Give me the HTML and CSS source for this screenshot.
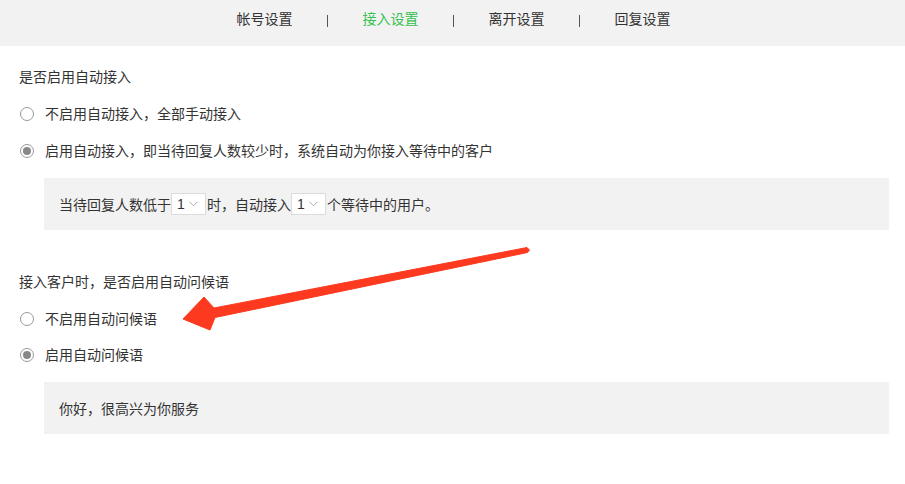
FILE: index.html
```html
<!DOCTYPE html>
<html lang="zh-CN">
<head>
<meta charset="utf-8">
<title>接入设置</title>
<link rel="stylesheet" href="styles.css">
</head>
<body>
<header class="nav">
  <span class="tab">帐号设置</span>
  <span class="sep"></span>
  <span class="tab active">接入设置</span>
  <span class="sep"></span>
  <span class="tab">离开设置</span>
  <span class="sep"></span>
  <span class="tab">回复设置</span>
</header>
<main class="main">
  <div class="title">是否启用自动接入</div>
  <div class="row"><span class="radio"></span><span>不启用自动接入，全部手动接入</span></div>
  <div class="row"><span class="radio checked"></span><span>启用自动接入，即当待回复人数较少时，系统自动为你接入等待中的客户</span></div>
  <div class="box">
    <span>当待回复人数低于</span><span class="select">1<svg class="chev" width="9" height="6" viewBox="0 0 9 6"><path d="M0.5 0.8 L4.5 4.8 L8.5 0.8" fill="none" stroke="#aaa" stroke-width="1"/></svg></span><span>时，自动接入</span><span class="select">1<svg class="chev" width="9" height="6" viewBox="0 0 9 6"><path d="M0.5 0.8 L4.5 4.8 L8.5 0.8" fill="none" stroke="#aaa" stroke-width="1"/></svg></span><span>个等待中的用户。</span>
  </div>
  <div class="title title2">接入客户时，是否启用自动问候语</div>
  <div class="row"><span class="radio"></span><span>不启用自动问候语</span></div>
  <div class="row row4"><span class="radio checked"></span><span>启用自动问候语</span></div>
  <div class="box">你好，很高兴为你服务</div>
</main>
<svg class="arrow" width="905" height="484" viewBox="0 0 905 484">
  <polygon points="183,319 204,297 214,308 527,247.5 529.5,250 527.5,252.5 215,317.5 210,330" fill="#fd3a1f" stroke="#fd3a1f" stroke-width="1" stroke-linejoin="round"/>
</svg>
</body>
</html>
```
FILE: styles.css
```css
html, body {
  margin: 0;
  padding: 0;
  background: #fff;
}
body {
  font-family: "Noto Sans CJK SC", "Noto Sans", sans-serif;
  font-size: 14px;
  color: #333;
  width: 905px;
  height: 484px;
  overflow: hidden;
  position: relative;
}
.nav {
  height: 46px;
  background: #f2f2f2;
  display: flex;
  justify-content: center;
  align-items: flex-start;
  box-sizing: border-box;
  padding-top: 8px;
  padding-left: 2px;
}
.tab {
  line-height: 20px;
  width: 56px;
  white-space: nowrap;
  color: #333;
}
.tab.active {
  color: #35c14f;
}
.sep {
  width: 1px;
  height: 12px;
  background: #555;
  margin: 7px 35px 0 34px;
}
.main {
  padding: 20px 16px 0 19px;
}
.title {
  line-height: 20px;
}
.title2 {
  margin-top: 41px;
}
.row {
  display: flex;
  align-items: center;
  line-height: 20px;
  margin-top: 17px;
}
.row4 {
  margin-top: 16px;
}
.radio {
  width: 14px;
  height: 14px;
  box-sizing: border-box;
  border: 1px solid #999;
  border-radius: 50%;
  margin-left: 1px;
  margin-right: 11px;
  margin-top: 1px;
  display: flex;
  align-items: center;
  justify-content: center;
  background: #fff;
}
.radio.checked::after {
  content: "";
  width: 8px;
  height: 8px;
  border-radius: 50%;
  background: #888;
}
.box {
  margin-top: 18px;
  margin-left: 25px;
  background: #f2f2f2;
  height: 52px;
  box-sizing: border-box;
  padding: 0 15px 1px;
  display: flex;
  align-items: center;
  line-height: 20px;
}
.select {
  display: inline-flex;
  align-items: center;
  width: 35px;
  height: 22px;
  box-sizing: border-box;
  border: 1px solid #dcdcdc;
  background: #fff;
  padding-left: 5px;
  margin-right: 1px;
  font-family: "Liberation Sans", sans-serif;
  font-size: 14px;
  color: #333;
}
.chev {
  margin-left: 4px;
}
.arrow {
  position: absolute;
  left: 0;
  top: 0;
  pointer-events: none;
}
```
